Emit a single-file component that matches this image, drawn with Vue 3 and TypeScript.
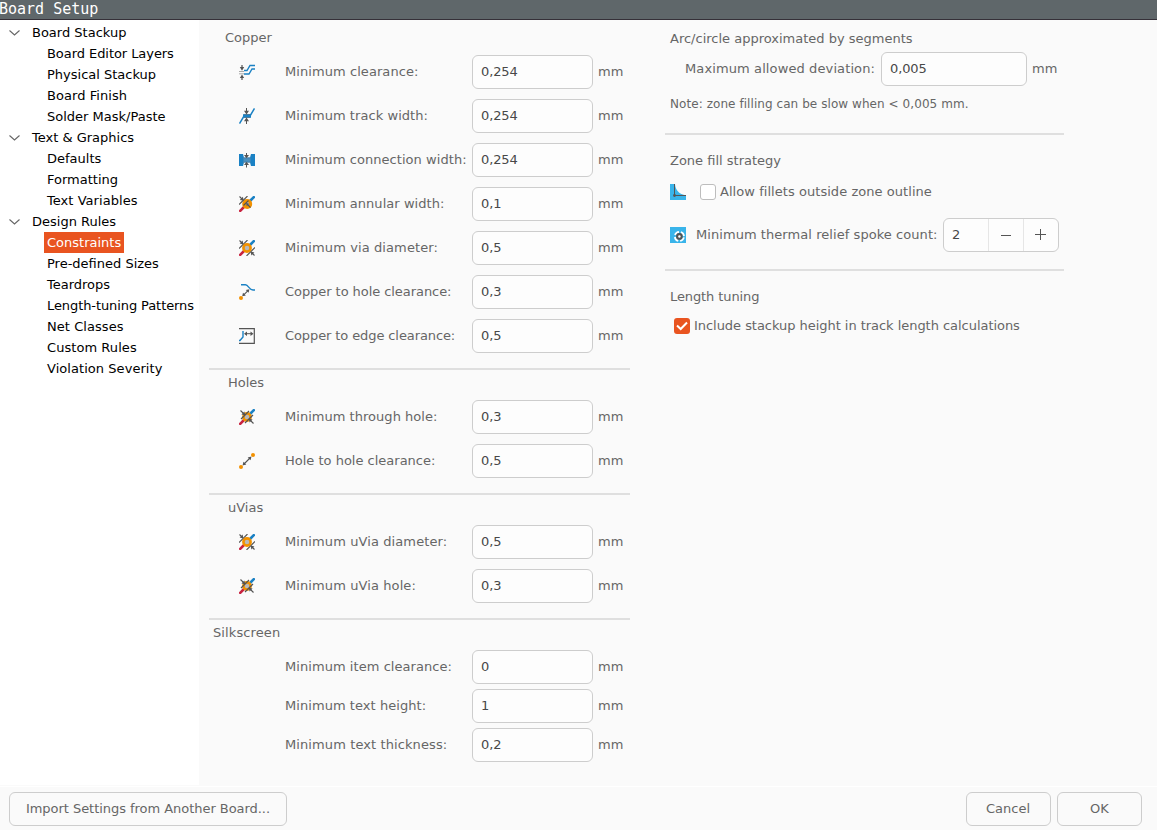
<script setup lang="ts">
import { ref } from 'vue'

interface TreeGroup { label: string; items: string[] }
interface Field { label: string; value: string; icon?: string; tracking?: number }
interface Section { title: string; kind: string; fields: Field[] }

const tree: TreeGroup[] = [
  { label: 'Board Stackup', items: ['Board Editor Layers', 'Physical Stackup', 'Board Finish', 'Solder Mask/Paste'] },
  { label: 'Text & Graphics', items: ['Defaults', 'Formatting', 'Text Variables'] },
  {
    label: 'Design Rules',
    items: ['Constraints', 'Pre-defined Sizes', 'Teardrops', 'Length-tuning Patterns', 'Net Classes', 'Custom Rules', 'Violation Severity'],
  },
]
const treeTracking: Record<string, number> = {
  'Board Editor Layers': -0.06,
  'Length-tuning Patterns': -0.09,
  'Board Finish': 0.06,
  'Text Variables': 0.05,
  'Violation Severity': 0.05,
  'Net Classes': 0.06,
  'Custom Rules': 0.06,
}
const selected = ref('Constraints')

const sections = ref<Section[]>([
  {
    title: 'Copper',
    kind: 'copper',
    fields: [
      { label: 'Minimum clearance:', value: '0,254', icon: 'clearance', tracking: 0.07 },
      { label: 'Minimum track width:', value: '0,254', icon: 'track', tracking: 0.06 },
      { label: 'Minimum connection width:', value: '0,254', icon: 'connection', tracking: 0.05 },
      { label: 'Minimum annular width:', value: '0,1', icon: 'annular', tracking: 0.05 },
      { label: 'Minimum via diameter:', value: '0,5', icon: 'via', tracking: 0.1 },
      { label: 'Copper to hole clearance:', value: '0,3', icon: 'copperhole', tracking: -0.06 },
      { label: 'Copper to edge clearance:', value: '0,5', icon: 'edge', tracking: -0.1 },
    ],
  },
  {
    title: 'Holes',
    kind: 'holes',
    fields: [
      { label: 'Minimum through hole:', value: '0,3', icon: 'hole', tracking: 0.03 },
      { label: 'Hole to hole clearance:', value: '0,5', icon: 'holehole' },
    ],
  },
  {
    title: 'uVias',
    kind: 'uvias',
    fields: [
      { label: 'Minimum uVia diameter:', value: '0,5', icon: 'via', tracking: 0.1 },
      { label: 'Minimum uVia hole:', value: '0,3', icon: 'hole', tracking: 0.1 },
    ],
  },
  {
    title: 'Silkscreen',
    kind: 'silk',
    fields: [
      { label: 'Minimum item clearance:', value: '0', tracking: 0.06 },
      { label: 'Minimum text height:', value: '1', tracking: 0.06 },
      { label: 'Minimum text thickness:', value: '0,2', tracking: 0.1 },
    ],
  },
])

const deviation = ref('0,005')
const spokes = ref(2)
const allowFillets = ref(false)
const includeHeight = ref(true)
</script>

<template>
  <div class="window">
    <header class="titlebar">Board Setup</header>
    <div class="body">
      <nav class="sidebar">
        <template v-for="group in tree" :key="group.label">
          <div class="group">
            <svg class="chevron" width="11" height="8" viewBox="0 0 11 8"><path d="M.5 1.5 5.5 6 10.5 1.5" fill="none" stroke="#666" stroke-width="1.1" /></svg>
            <span>{{ group.label }}</span>
          </div>
          <div v-for="item in group.items" :key="item" class="leaf" @click="selected = item">
            <span :class="{ active: item === selected }" :style="{ letterSpacing: (treeTracking[item] ?? 0) + 'px' }">{{ item }}</span>
          </div>
        </template>
      </nav>

      <main class="content">
        <div class="left">
          <section v-for="s in sections" :key="s.title" :class="['section', s.kind]">
            <h3>{{ s.title }}</h3>
            <div class="rows">
              <div v-for="f in s.fields" :key="f.label" class="row">
                <span class="icon">
                  <svg v-if="f.icon" width="16" height="16" viewBox="0 0 16 16" fill="none">
                    <g v-if="f.icon === 'clearance'">
                      <path d="M5 6.5H8L11 1.5H16M5 10H10L13 5H16" stroke="#1a81c4" stroke-width="1.4" />
                      <path d="M0 7.5H5M0 9.8H5" stroke="#a8a8a8" />
                      <path d="M3 1V4M3 13V16" stroke="#545454" stroke-width="1.2" />
                      <path d="M.8 3H5.2L3 6.8ZM.8 14H5.2L3 10.6Z" fill="#545454" />
                    </g>
                    <g v-else-if="f.icon === 'track'">
                      <path d="M.5 15.5 5 8H11L15.5 .5" stroke="#1a81c4" stroke-width="1.5" />
                      <rect x="4" y="6.2" width="8" height="3.6" fill="#1a81c4" />
                      <path d="M5 6.5H11M5 9.5H11" stroke="#4c7590" stroke-width=".8" />
                      <path d="M7.5 0V4M7.5 12V16" stroke="#545454" />
                      <path d="M5 2.8H10L7.5 6.4ZM5 13.2H10L7.5 9.6Z" fill="#545454" />
                    </g>
                    <g v-else-if="f.icon === 'connection'">
                      <path d="M0 2H4L5 5.5H11L12 2H16V14H12L11 10.5H5L4 14H0Z" fill="#1a81c4" />
                      <path d="M4 6H11.5M4 10H11.5" stroke="#6686a0" stroke-width="1.2" />
                      <rect x="4.5" y="6.5" width="7" height="3" fill="#4d90bd" />
                      <path d="M7.5 1V4M7.5 12V15.5" stroke="#545454" />
                      <path d="M5 3H10L7.5 6.2ZM5 13H10L7.5 9.8Z" fill="#545454" />
                    </g>
                    <g v-else-if="f.icon === 'annular'">
                      <path d="M11 5 14.8 1.2" stroke="#1a81c4" stroke-width="2.6" stroke-linecap="round" />
                      <path d="M1.2 14.8 5 11" stroke="#c8223f" stroke-width="2.6" stroke-linecap="round" />
                      <circle cx="8.2" cy="8" r="5" fill="#f29100" />
                      <circle cx="8.4" cy="7.8" r="1.7" fill="#b9b9b9" />
                      <path d="M0 8.5 8.5 0M4.5 9.5 9.5 4.5M.5 .5 3 3M8 8 11.5 11.5" stroke="#545454" stroke-width="1.1" />
                      <path d="M4.8 4.8 .8 3.9 3.9 .8ZM7 7 10.2 7.8 7.8 10.2Z" fill="#545454" />
                    </g>
                    <g v-else-if="f.icon === 'via'">
                      <path d="M11 5 14.8 1.2" stroke="#1a81c4" stroke-width="2.6" stroke-linecap="round" />
                      <path d="M1.2 14.8 5 11" stroke="#c8223f" stroke-width="2.6" stroke-linecap="round" />
                      <path d="M0 8.5 8.5 0M7.5 16 16 7.5M.5 .5 3 3M13 13 15.5 15.5" stroke="#545454" stroke-width="1.1" />
                      <path d="M4.4 4.4 .6 3.6 3.6 .6ZM11.6 11.6 15.4 12.4 12.4 15.4Z" fill="#545454" />
                      <circle cx="8" cy="8" r="3.6" fill="#b9b9b9" stroke="#f29100" stroke-width="2.6" />
                    </g>
                    <g v-else-if="f.icon === 'hole'">
                      <path d="M11 5 14.8 1.2" stroke="#1a81c4" stroke-width="2.6" stroke-linecap="round" />
                      <path d="M1.2 14.8 5 11" stroke="#c8223f" stroke-width="2.6" stroke-linecap="round" />
                      <circle cx="8" cy="8" r="3.6" fill="#b9b9b9" stroke="#f29100" stroke-width="2.6" />
                      <path d="M2 10 10 2M6 14 14 6M1.5 1.5 5 5M11 11 14.5 14.5" stroke="#545454" stroke-width="1.1" />
                      <path d="M6.2 6.2 2.4 5.4 5.4 2.4ZM9.8 9.8 13.6 10.6 10.6 13.6Z" fill="#545454" />
                    </g>
                    <g v-else-if="f.icon === 'copperhole'">
                      <path d="M2 .8H6.5C9.5 .8 10 6 14 6H16" stroke="#1a81c4" stroke-width="1.4" />
                      <path d="M4.5 11.2 9 6.6" stroke="#545454" stroke-width="1.1" />
                      <path d="M3.2 12.3 4 8.7 6.8 11.5ZM10.4 5.2 9.6 8.8 6.8 6Z" fill="#545454" />
                      <circle cx="2" cy="14" r="2" fill="#f29100" />
                    </g>
                    <g v-else-if="f.icon === 'edge'">
                      <path d="M0 .6H15.3V15.3H0" stroke="#545454" stroke-width="1.2" />
                      <path d="M4 3V9L1 12.5H0" stroke="#1a81c4" stroke-width="1.4" />
                      <path d="M6 5.7H13" stroke="#545454" />
                      <path d="M5 5.7 8 3.5V8ZM14.5 5.7 11.5 3.5V8Z" fill="#545454" />
                    </g>
                    <g v-else>
                      <path d="M5 11 11 5" stroke="#545454" stroke-width="1.1" />
                      <path d="M3.5 12.5 4.5 8.7 7.3 11.5ZM12.5 3.5 11.5 7.3 8.7 4.5Z" fill="#545454" />
                      <circle cx="2" cy="14" r="2" fill="#f29100" />
                      <circle cx="14" cy="2" r="2" fill="#f29100" />
                    </g>
                  </svg>
                </span>
                <label :style="{ letterSpacing: (f.tracking ?? 0) + 'px' }">{{ f.label }}</label>
                <input v-model="f.value" class="entry" type="text" />
                <span class="unit">mm</span>
              </div>
            </div>
          </section>
        </div>

        <div class="right">
          <section class="arc">
            <h3>Arc/circle approximated by segments</h3>
            <div class="deviation">
              <label>Maximum allowed deviation:</label>
              <input v-model="deviation" class="entry" type="text" />
              <span class="unit">mm</span>
            </div>
            <p class="note">Note: zone filling can be slow when &lt; 0,005 mm.</p>
          </section>
          <section class="zone">
            <h3>Zone fill strategy</h3>
            <div class="fillet" @click="allowFillets = !allowFillets">
              <svg width="16" height="16" viewBox="0 0 16 16">
                <path d="M0 0H5C5.5 6 9 10.5 16 11.3V16H0Z" fill="#39b4ea" />
                <path d="M4.5 0V12M4 11.5H16" fill="none" stroke="#545454" />
                <circle cx="4.5" cy="11.5" r="1.4" fill="#545454" />
              </svg>
              <span :class="['check', { on: allowFillets }]"></span>
              <span class="cap">Allow fillets outside zone outline</span>
            </div>
            <div class="spoke">
              <svg width="16" height="16" viewBox="0 0 16 16" fill="none">
                <rect width="16" height="16" fill="#39b4ea" />
                <circle cx="9.4" cy="9.4" r="4.5" stroke="#fff" stroke-width="1.9" stroke-dasharray="5.07 2" stroke-dashoffset="-1" />
                <circle cx="9.4" cy="9.4" r="2.3" fill="#fff" stroke="#545454" stroke-width="2.1" />
              </svg>
              <label>Minimum thermal relief spoke count:</label>
              <div class="spin">
                <span class="num">{{ spokes }}</span>
                <button @click="spokes--"><svg width="12" height="12" viewBox="0 0 12 12"><path d="M1 6.5H11" stroke="#555" /></svg></button>
                <button @click="spokes++"><svg width="12" height="12" viewBox="0 0 12 12"><path d="M0 5.5H11M5.5 0V11" stroke="#555" /></svg></button>
              </div>
            </div>
          </section>
          <section class="tuning">
            <h3>Length tuning</h3>
            <div class="include" @click="includeHeight = !includeHeight">
              <span :class="['check', { on: includeHeight }]">
                <svg v-if="includeHeight" width="16" height="16" viewBox="0 0 16 16"><path d="M3 7.5 6.7 11 13 4.5" fill="none" stroke="#fff" stroke-width="2" /></svg>
              </span>
              <span class="cap">Include stackup height in track length calculations</span>
            </div>
          </section>
        </div>
      </main>
    </div>
    <footer class="footer">
      <button class="btn import">Import Settings from Another Board...</button>
      <button class="btn cancel">Cancel</button>
      <button class="btn">OK</button>
    </footer>
  </div>
</template>

<style>
html, body { margin: 0; background: #fafafa; }
</style>

<style scoped>
.window {
  width: 1157px;
  height: 830px;
  display: flex;
  flex-direction: column;
  overflow: hidden;
  background: #fafafa;
  color: #666;
  font: 13px/20px "DejaVu Sans", sans-serif;
}
.window * { box-sizing: border-box; }
svg { display: block; flex: none; }
.titlebar {
  flex: none;
  height: 20px;
  background: #5f676a;
  border-bottom: 1px solid #353038;
  color: #fff;
  font: 15px/18px "DejaVu Sans Mono", monospace;
  text-indent: -1px;
}
.body { flex: none; height: 766px; display: flex; padding-bottom: 1px; }
.sidebar { width: 199px; background: #fff; color: #000; padding-top: 2px; line-height: 21px; white-space: nowrap; }
.group { display: flex; align-items: center; height: 21px; padding-left: 9px; gap: 12px; }
.leaf { height: 21px; padding-left: 44px; }
.leaf span { display: inline-block; height: 21px; padding: 0 3px; }
.leaf .active { background: #e95420; color: #fff; }
.content { flex: 1; display: flex; padding-left: 10px; gap: 35px; }
h3 { margin: 0; font-size: 13px; font-weight: 400; line-height: 20px; }
label, .cap, .note, .unit { white-space: nowrap; }

.left { width: 421px; }
.section { padding-bottom: 10px; border-bottom: 2px solid #dfdfdf; }
.section h3 { height: 25px; padding: 3px 0 0 19px; }
.copper h3 { height: 30px; padding: 8px 0 0 16px; }
.silk { border-bottom: 0; }
.silk h3 { height: 30px; padding-left: 4px; letter-spacing: 0.1px; }
.silk .rows { display: flex; flex-direction: column; gap: 5px; }
.row { height: 44px; display: grid; grid-template-columns: 46px 187px 121px auto; padding-left: 30px; align-items: center; }
.silk .row { height: 34px; }
.entry {
  width: 121px;
  height: 34px;
  margin: 0;
  padding: 0 8px 1px;
  border: 1px solid #cdcdcd;
  border-radius: 6px;
  background: #fdfdfd;
  color: #484848;
  font: inherit;
  letter-spacing: -0.1px;
  outline: 0;
}
.unit { padding-left: 5px; }

.right { width: 399px; }
.arc { height: 115px; padding: 9px 0 0 5px; border-bottom: 2px solid #dfdfdf; }
.deviation { display: flex; align-items: center; padding-left: 15px; margin-top: 3px; height: 34px; }
.deviation label { width: 196px; letter-spacing: 0.11px; }
.deviation .entry { width: 146px; }
.note { margin: 8px 0 0; font-size: 12px; letter-spacing: 0.065px; }
.zone { height: 136px; padding: 16px 0 0 5px; border-bottom: 2px solid #dfdfdf; }
.fillet { display: flex; align-items: center; margin-top: 11px; height: 20px; }
.fillet .cap { letter-spacing: 0.05px; }
.check { width: 16px; height: 16px; border: 1px solid #bdbdbd; border-radius: 3px; background: #fff; margin: 0 4px 0 14px; }
.check.on { background: #e95420; border: 0; }
.spoke { display: flex; align-items: center; margin-top: 16px; height: 34px; }
.spoke label { width: 247px; margin-left: 10px; letter-spacing: 0.06px; }
.spin { width: 116px; height: 34px; display: flex; border: 1px solid #cdcdcd; border-radius: 6px; background: #fdfdfd; overflow: hidden; }
.num { flex: 1; padding-left: 8px; line-height: 31px; color: #484848; }
.spin button { width: 35px; padding: 0; border: 0; border-left: 1px solid #e6e6e6; background: none; display: grid; place-items: center; }
.tuning { padding: 16px 0 0 5px; }
.tuning h3 { letter-spacing: -0.1px; }
.include { display: flex; align-items: center; margin-top: 9px; height: 20px; }
.include .check { margin-left: 4px; }
.include .cap { letter-spacing: -0.04px; }

.footer { height: 44px; border-top: 1px solid #fff; display: flex; align-items: flex-start; gap: 6px; padding: 5px 15px 0 9px; }
.btn { width: 85px; height: 34px; padding: 0; border: 1px solid #cdcdcd; border-radius: 6px; background: #fafafa; color: #666; font: inherit; white-space: nowrap; }
.cancel { padding-right: 1px; }
.import { width: 278px; margin-right: auto; letter-spacing: -0.04px; }
</style>
